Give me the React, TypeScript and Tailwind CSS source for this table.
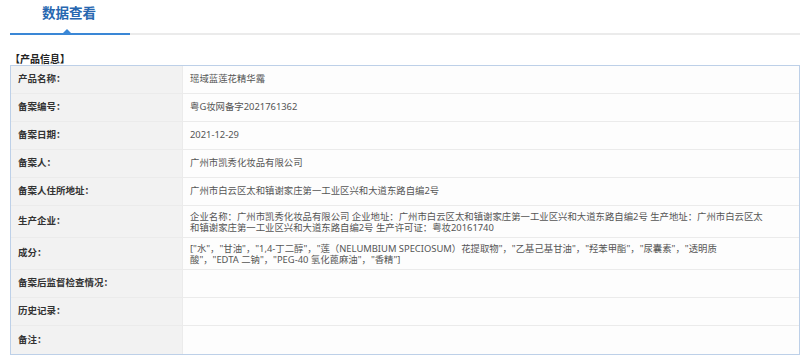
import React from "react";

const rows: { label: string; value: React.ReactNode; tall?: boolean }[] = [
  { label: "产品名称：", value: "瑶域蓝莲花精华露" },
  { label: "备案编号：", value: "粤G妆网备字2021761362" },
  { label: "备案日期：", value: "2021-12-29" },
  { label: "备案人：", value: "广州市凯秀化妆品有限公司" },
  { label: "备案人住所地址：", value: "广州市白云区太和镇谢家庄第一工业区兴和大道东路自编2号" },
  {
    label: "生产企业：",
    tall: true,
    value: (
      <>
        <span className="whitespace-nowrap">企业名称：广州市凯秀化妆品有限公司 企业地址：广州市白云区太和镇谢家庄第一工业区兴和大道东路自编2号 生产地址：广州市白云区太</span>
        <br />
        <span className="whitespace-nowrap">和镇谢家庄第一工业区兴和大道东路自编2号 生产许可证：粤妆20161740</span>
      </>
    ),
  },
  {
    label: "成分：",
    tall: true,
    value: (
      <>
        <span className="whitespace-nowrap">["水"，"甘油"，"1,4-丁二醇"，"莲（NELUMBIUM SPECIOSUM）花提取物"，"乙基己基甘油"，"羟苯甲酯"，"尿囊素"，"透明质</span>
        <br />
        <span className="whitespace-nowrap">酸"，"EDTA 二钠"，"PEG-40 氢化蓖麻油"，"香精"]</span>
      </>
    ),
  },
  { label: "备案后监督检查情况：", value: "" },
  { label: "历史记录：", value: "" },
  { label: "备注：", value: "" },
];

export default function App() {
  return (
    <div
      className="w-[800px] h-[359px] overflow-hidden bg-white"
      style={{ fontFamily: '"Noto Sans", "Noto Sans CJK SC", sans-serif' }}
    >
      <div className="relative h-[35px] pl-[10px]">
        <div className="pl-[32px] pt-[4px] text-[13.5px] leading-[18px] font-bold text-[#2767b0]">
          数据查看
        </div>
        <div className="absolute left-[10px] right-0 top-[33px] flex h-[2px]">
          <div className="w-[120px] bg-[#3a87d6]" />
          <div className="flex-1 bg-[#ebebeb]" />
        </div>
        <div className="absolute left-[62px] top-[29px] h-0 w-0 border-x-[5px] border-b-[5px] border-x-transparent border-b-[#3a87d6]" />
      </div>
      <div className="pl-[10px] pt-[18px] text-[10px] leading-[12px] font-bold text-[#222]">【产品信息】</div>
      <div className="ml-[10px] w-[790px] border border-[#bdd0e8]">
        {rows.map((r, i) => (
          <div
            key={i}
            className={`grid grid-cols-[172px_1fr] ${i < rows.length - 1 ? "border-b border-[#ebebeb]" : ""} ${r.tall ? "h-[32px]" : "h-[28px]"}`}
          >
            <div className="flex items-center border-r border-[#ebebeb] bg-[#f2f2f2] pl-[7px] text-[9.5px] font-bold text-[#333]">
              {r.label}
            </div>
            <div className={`flex items-center bg-[#fdfdfd] pl-[7px] text-[9.4px] text-[#555] ${r.tall ? "leading-[11px]" : ""}`}>
              <div>{r.value}</div>
            </div>
          </div>
        ))}
      </div>
    </div>
  );
}
